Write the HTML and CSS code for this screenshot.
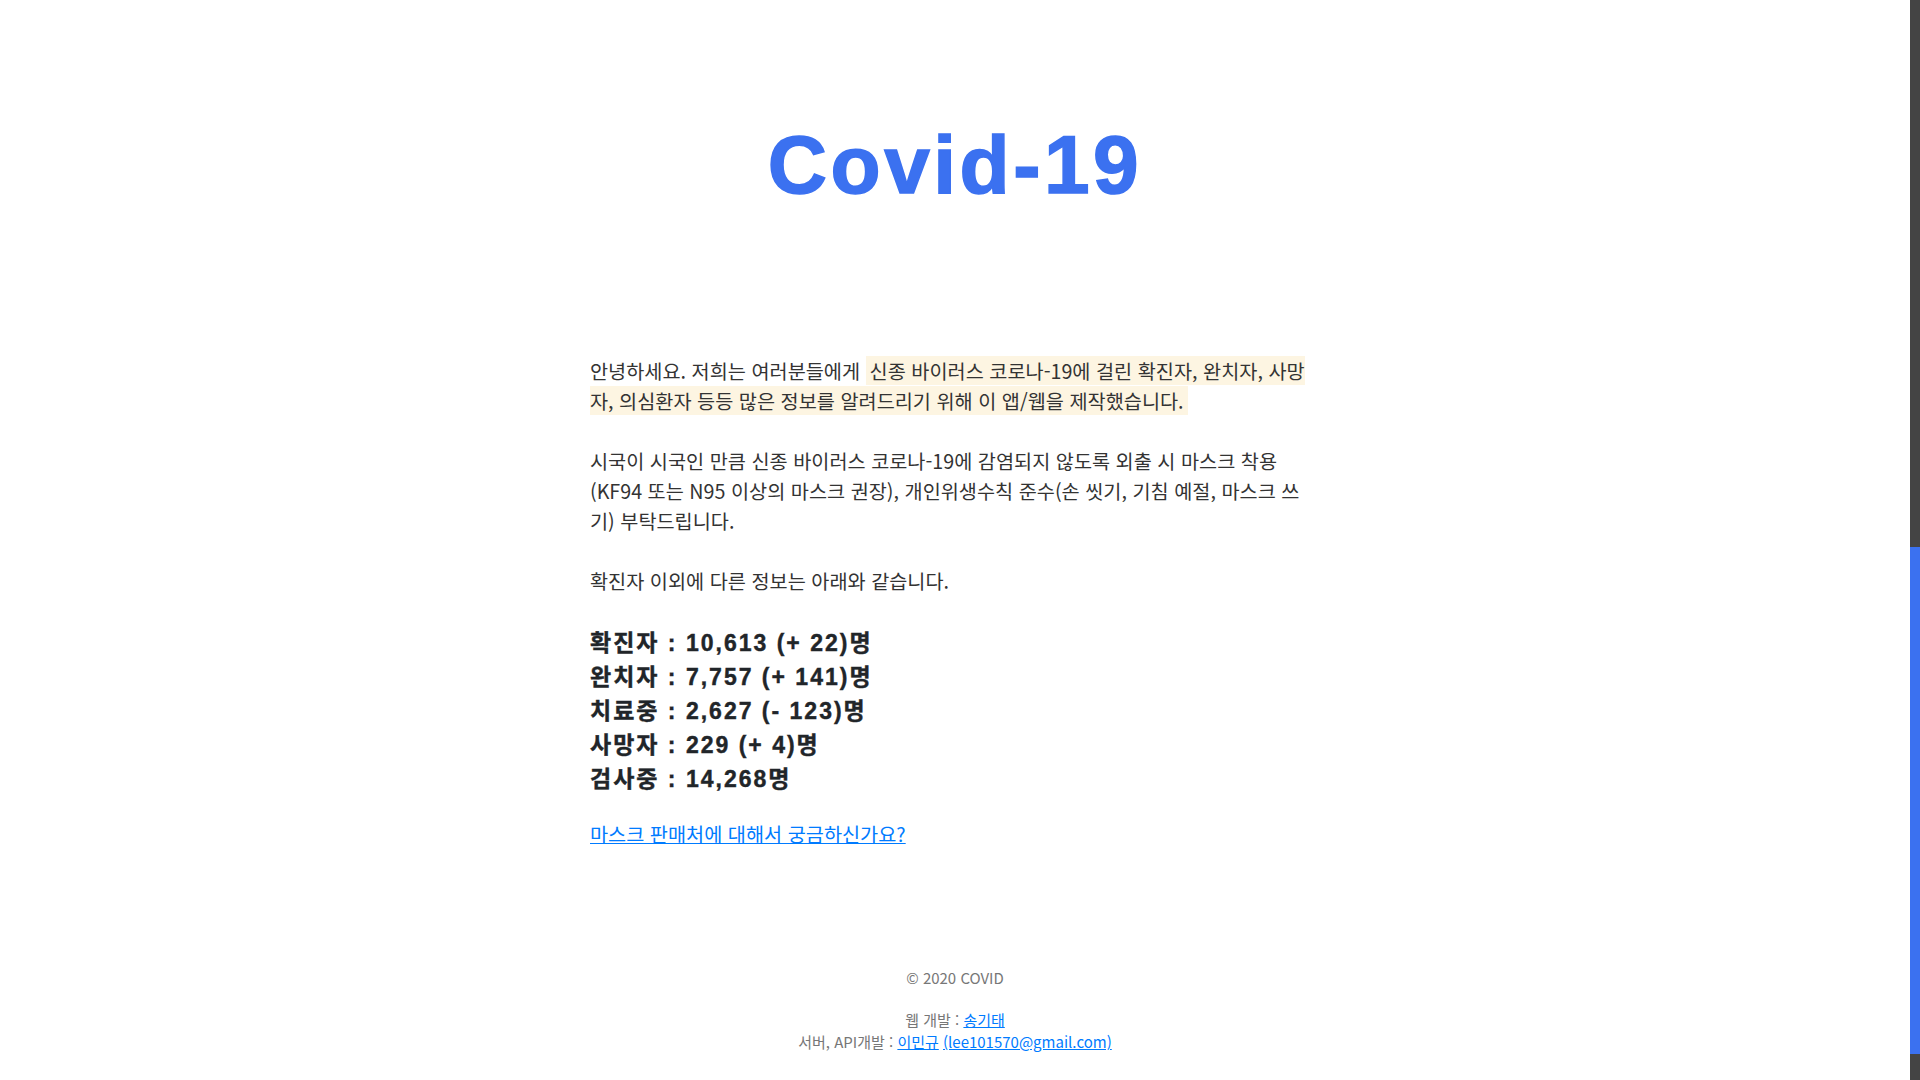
FILE: index.html
```html
<!DOCTYPE html>
<html lang="ko">
<head>
<meta charset="utf-8">
<title>Covid-19</title>
<link rel="stylesheet" href="styles.css">
</head>
<body>
<div class="page">
  <header class="header">
    <h1 class="title">Covid-19</h1>
  </header>
  <main class="content">
    <p class="para">안녕하세요. 저희는 여러분들에게 <span class="mark">신종 바이러스 코로나-19에 걸린 확진자, 완치자, 사망자, 의심환자 등등 많은 정보를 알려드리기 위해 이 앱/웹을 제작했습니다.</span></p>
    <p class="para">시국이 시국인 만큼 신종 바이러스 코로나-19에 감염되지 않도록 외출 시 마스크 착용 (KF94 또는 N95 이상의 마스크 권장), 개인위생수칙 준수(손 씻기, 기침 예절, 마스크 쓰기) 부탁드립니다.</p>
    <p class="para">확진자 이외에 다른 정보는 아래와 같습니다.</p>
    <ul class="stats">
      <li>확진자 : 10,613 (+ 22)명</li>
      <li>완치자 : 7,757 (+ 141)명</li>
      <li>치료중 : 2,627 (- 123)명</li>
      <li>사망자 : 229 (+ 4)명</li>
      <li>검사중 : 14,268명</li>
    </ul>
    <a class="link" href="#">마스크 판매처에 대해서 궁금하신가요?</a>
  </main>
  <footer class="footer">
    <p class="copy">© 2020 COVID</p>
    <p class="credits">웹 개발 : <a href="#">송기태</a><br>서버, API개발 : <a href="#">이민규</a> <a href="#">(lee101570@gmail.com)</a></p>
  </footer>
</div>
<div class="scrollbar"><div class="thumb"></div></div>
</body>
</html>
```
FILE: styles.css
```css
html, body {
  margin: 0;
  padding: 0;
  background: #fff;
  overflow: hidden;
}
body {
  font-family: "Noto Sans CJK KR", "Noto Sans", sans-serif;
  color: #333;
}
.page {
  width: 1910px;
}
.header {
  padding-top: 124px;
  text-align: center;
}
.title {
  margin: 0;
  font-family: "Liberation Sans", Arial, sans-serif;
  font-weight: 700;
  font-size: 82px;
  line-height: 82px;
  letter-spacing: 3.5px;
  color: #3b71f0;
  -webkit-text-stroke: 1.5px #3b71f0;
}
.content {
  width: 730px;
  box-sizing: border-box;
  padding-right: 8px;
  margin: 150px auto 0;
}
.para {
  margin: 0 0 30px;
  font-size: 19.7px;
  line-height: 30px;
}
.mark {
  background: #fdf5e2;
  padding: 0 4px;
}
.stats {
  list-style: none;
  margin: 0 0 23px;
  padding: 0;
  font-family: "Liberation Sans", "Noto Sans CJK KR", sans-serif;
  font-weight: 700;
  font-size: 23px;
  letter-spacing: 2px;
  color: #212529;
  -webkit-text-stroke: 0.4px #212529;
}
.stats li {
  height: 34px;
  line-height: 34px;
}
.link {
  font-size: 19.7px;
  line-height: 30px;
  color: #007bff;
  text-decoration: underline;
}
.footer {
  margin-top: 118px;
  text-align: center;
  font-size: 15px;
  line-height: 22px;
  color: #777;
}
.copy {
  margin: 0 0 20px;
}
.credits {
  margin: 0;
}
.credits a {
  color: #007bff;
}
.scrollbar {
  position: fixed;
  top: 0;
  right: 0;
  width: 10px;
  height: 100%;
  background: #444;
}
.thumb {
  position: absolute;
  left: 0;
  top: 547px;
  width: 10px;
  height: 507px;
  background: #3b71f0;
}
```
